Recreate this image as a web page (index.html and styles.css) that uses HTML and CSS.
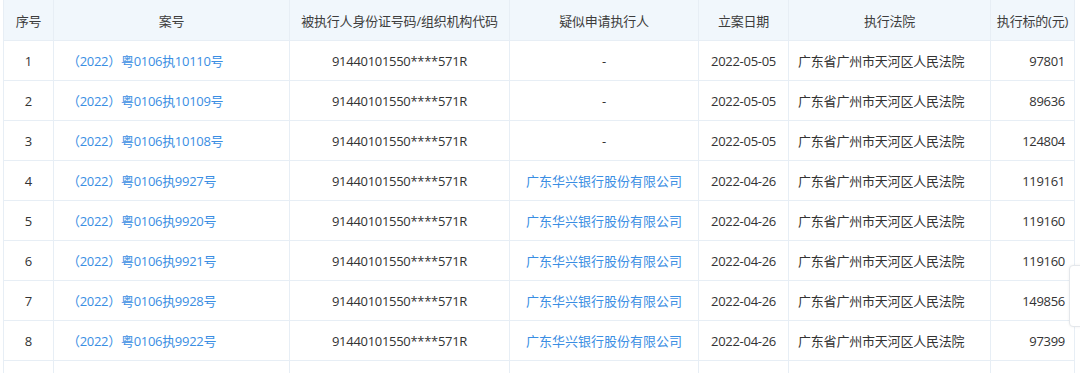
FILE: index.html
```html
<!DOCTYPE html>
<html lang="zh">
<head>
<meta charset="utf-8">
<link rel="stylesheet" href="styles.css">
</head>
<body>
<div class="wrap">
<table class="grid">
<colgroup>
<col class="c-no"><col class="c-case"><col class="c-id"><col class="c-app"><col class="c-date"><col class="c-court"><col class="c-amt">
</colgroup>
<thead>
<tr><th>序号</th><th>案号</th><th>被执行人身份证号码/组织机构代码</th><th>疑似申请执行人</th><th>立案日期</th><th>执行法院</th><th>执行标的(元)</th></tr>
</thead>
<tbody>
<tr><td class="ctr">1</td><td class="case"><a>（2022）粤0106执10110号</a></td><td class="ctr num">91440101550****571R</td><td class="ctr">-</td><td class="ctr num">2022-05-05</td><td class="court">广东省广州市天河区人民法院</td><td class="amt num">97801</td></tr>
<tr><td class="ctr">2</td><td class="case"><a>（2022）粤0106执10109号</a></td><td class="ctr num">91440101550****571R</td><td class="ctr">-</td><td class="ctr num">2022-05-05</td><td class="court">广东省广州市天河区人民法院</td><td class="amt num">89636</td></tr>
<tr><td class="ctr">3</td><td class="case"><a>（2022）粤0106执10108号</a></td><td class="ctr num">91440101550****571R</td><td class="ctr">-</td><td class="ctr num">2022-05-05</td><td class="court">广东省广州市天河区人民法院</td><td class="amt num">124804</td></tr>
<tr><td class="ctr">4</td><td class="case"><a>（2022）粤0106执9927号</a></td><td class="ctr num">91440101550****571R</td><td class="ctr"><a>广东华兴银行股份有限公司</a></td><td class="ctr num">2022-04-26</td><td class="court">广东省广州市天河区人民法院</td><td class="amt num">119161</td></tr>
<tr><td class="ctr">5</td><td class="case"><a>（2022）粤0106执9920号</a></td><td class="ctr num">91440101550****571R</td><td class="ctr"><a>广东华兴银行股份有限公司</a></td><td class="ctr num">2022-04-26</td><td class="court">广东省广州市天河区人民法院</td><td class="amt num">119160</td></tr>
<tr><td class="ctr">6</td><td class="case"><a>（2022）粤0106执9921号</a></td><td class="ctr num">91440101550****571R</td><td class="ctr"><a>广东华兴银行股份有限公司</a></td><td class="ctr num">2022-04-26</td><td class="court">广东省广州市天河区人民法院</td><td class="amt num">119160</td></tr>
<tr><td class="ctr">7</td><td class="case"><a>（2022）粤0106执9928号</a></td><td class="ctr num">91440101550****571R</td><td class="ctr"><a>广东华兴银行股份有限公司</a></td><td class="ctr num">2022-04-26</td><td class="court">广东省广州市天河区人民法院</td><td class="amt num">149856</td></tr>
<tr><td class="ctr">8</td><td class="case"><a>（2022）粤0106执9922号</a></td><td class="ctr num">91440101550****571R</td><td class="ctr"><a>广东华兴银行股份有限公司</a></td><td class="ctr num">2022-04-26</td><td class="court">广东省广州市天河区人民法院</td><td class="amt num">97399</td></tr>
<tr class="tail"><td></td><td></td><td></td><td></td><td></td><td></td><td></td></tr>
</tbody>
</table>
<div class="side-tab"></div>
</div>
</body>
</html>
```
FILE: styles.css
```css
html, body {
  margin: 0;
  padding: 0;
  background: #ffffff;
  overflow: hidden;
}
body {
  font-family: "Open Sans", "Noto Sans CJK SC", sans-serif;
  font-size: 13px;
  color: #333333;
}
.wrap {
  position: relative;
  padding-left: 3px;
  height: 373px;
  overflow: hidden;
}
.grid {
  border-collapse: collapse;
  table-layout: fixed;
  width: 1071px;
}
.c-no { width: 50px; }
.c-case { width: 236px; }
.c-id { width: 220px; }
.c-app { width: 189px; }
.c-date { width: 90px; }
.c-court { width: 202px; }
.c-amt { width: 84px; }
.grid th, .grid td {
  border: 1px solid #e7eef5;
  height: 39px;
  padding: 0;
  white-space: nowrap;
  overflow: hidden;
}
.grid th {
  background: #f1f7fc;
  font-weight: normal;
  color: #3d3d3d;
  text-align: center;
  height: 40px;
  border-top: 0;
  letter-spacing: -0.2px;
}
.grid td.ctr { text-align: center; }
.grid td.num { letter-spacing: -0.3px; }
.grid td.case { text-align: left; padding-left: 13px; letter-spacing: -0.3px; }
.grid td.court { text-align: left; padding-left: 9px; letter-spacing: -0.2px; }
.grid td.amt { text-align: right; padding-right: 9px; }
.grid a {
  color: #3a8ee3;
  text-decoration: none;
}
.grid a:only-child { letter-spacing: inherit; }
.side-tab {
  position: absolute;
  left: 1069px;
  top: 265px;
  width: 30px;
  height: 60px;
  border: 1px solid #e4e7eb;
  border-radius: 4px;
  background: #ffffff;
  box-shadow: 0 0 3px rgba(0,0,0,0.06);
}
```
